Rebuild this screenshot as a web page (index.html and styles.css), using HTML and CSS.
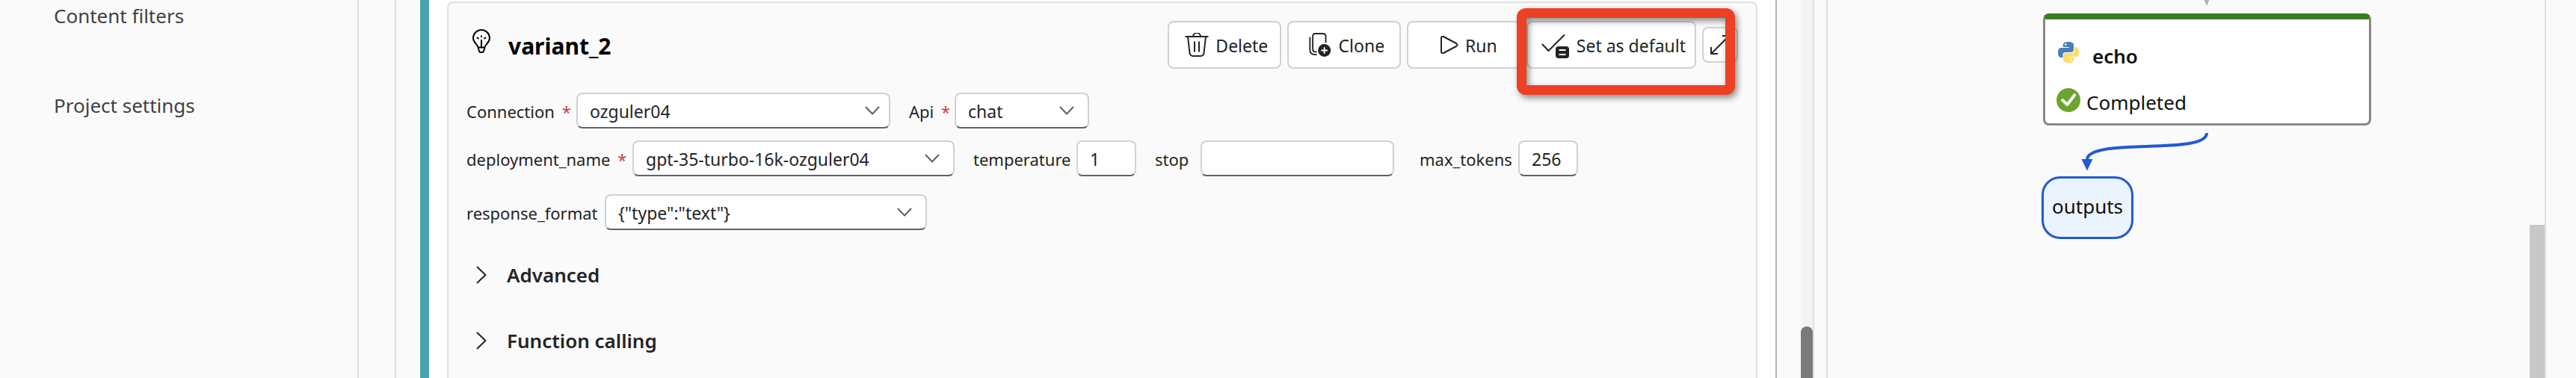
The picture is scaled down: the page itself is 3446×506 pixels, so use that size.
FILE: index.html
```html
<!DOCTYPE html>
<html lang="en">
<head>
<meta charset="utf-8">
<title>Prompt flow - variant_2</title>
<link rel="stylesheet" href="styles.css">
</head>
<body>
<nav class="sidebar" aria-label="Project">
  <a class="nav-link" href="#filters">Content filters</a>
  <a class="nav-link" href="#settings">Project settings</a>
</nav>
<main class="workspace">
  <section class="editor">
    <div class="node-panel">
      <article class="variant">
        <header class="variant-head">
          <svg class="bulb" viewBox="0 0 24 32" aria-hidden="true">
            <path d="M7.5 24.5C7 20 1 18.500 1 12A11 11 0 0 1 23 12C23 18.500 17 20 16.500 24.500M7.500 24.500h9M7.500 24.500l1.500 5q.4 1.500 2 1.500h2q1.600 0 2-1.500l1.500-5M12 24V14M12 8.500v2.500M6 11l2.500 2M18 11l-2.500 2"/>
          </svg>
          <h2 class="variant-name">variant_2</h2>
          <div class="toolbar">
            <button class="btn" type="button">
              <svg class="icon" viewBox="0 0 32 32" aria-hidden="true"><path d="M.5 5h31M11 5a5 5 0 0 1 10 0M4 5l2.500 22q.5 4 4.500 4h10q4 0 4.500-4L28 5M13 11.500v14M19 11.500v14"/></svg>
              Delete
            </button>
            <button class="btn" type="button">
              <svg class="icon" viewBox="0 0 32 34" aria-hidden="true"><path d="M24 14V5q0-4-4-4H9Q5.500 1 5.500 5v18q0 4 4 4h2M1.500 6v18q0 7 7 7h3"/><circle class="solid" cx="22" cy="25" r="9"/><path class="cut" d="M22 20.500v9M17.500 25h9"/></svg>
              Clone
            </button>
            <button class="btn" type="button">
              <svg class="icon" viewBox="0 0 32 32" aria-hidden="true"><path d="M9 7v18q0 3 3 2l17-9q3-2 0-4L12 5Q9 4 9 7z"/></svg>
              Run
            </button>
            <button class="btn" type="button">
              <svg class="icon icon-wide" viewBox="0 0 38 36" aria-hidden="true"><path d="M1 17l8.500 9L31 4.500"/><rect class="solid" x="19" y="20" width="18" height="16" rx="4"/><path class="cut" d="M23.500 25h9M23.500 31h9"/></svg>
              Set as default
            </button>
            <button class="btn btn-small" type="button" aria-label="Expand">
              <svg class="icon" viewBox="0 0 32 32" aria-hidden="true"><path d="M4 28L28 4M4 19v9h9M19 4h9v9"/></svg>
            </button>
            <div class="highlight"></div>
          </div>
        </header>

        <form class="params">
          <div class="row">
            <label class="label label-connection" for="connection">Connection <span class="req">*</span></label>
            <span class="picker picker-edge">
              <select class="control" id="connection"><option>ozguler04</option></select>
              <svg class="chevron" viewBox="0 0 20 12" aria-hidden="true"><path d="M1 1l9 9.500L19 1"/></svg>
            </span>
            <label class="label label-api" for="api">Api <span class="req">*</span></label>
            <span class="picker picker-short">
              <select class="control" id="api"><option>chat</option></select>
              <svg class="chevron" viewBox="0 0 20 12" aria-hidden="true"><path d="M1 1l9 9.500L19 1"/></svg>
            </span>
          </div>
          <div class="row">
            <label class="label label-deployment" for="deployment">deployment_name <span class="req">*</span></label>
            <span class="picker">
              <select class="control" id="deployment"><option>gpt-35-turbo-16k-ozguler04</option></select>
              <svg class="chevron" viewBox="0 0 20 12" aria-hidden="true"><path d="M1 1l9 9.500L19 1"/></svg>
            </span>
            <label class="label label-temperature" for="temperature">temperature</label>
            <input class="control number" id="temperature" type="text" value="1">
            <label class="label label-stop" for="stop">stop</label>
            <input class="control stop" id="stop" type="text">
            <label class="label label-tokens" for="tokens">max_tokens</label>
            <input class="control number" id="tokens" type="text" value="256">
          </div>
          <div class="row row-last">
            <label class="label label-format" for="format">response_format</label>
            <span class="picker">
              <select class="control" id="format"><option>{"type":"text"}</option></select>
              <svg class="chevron" viewBox="0 0 20 12" aria-hidden="true"><path d="M1 1l9 9.500L19 1"/></svg>
            </span>
          </div>
        </form>

        <div class="sections">
          <button class="section" type="button" aria-expanded="false">
            <svg class="caret" viewBox="0 0 14 24" aria-hidden="true"><path d="M1 1l11.500 11L1 23"/></svg>Advanced
          </button>
          <button class="section" type="button" aria-expanded="false">
            <svg class="caret" viewBox="0 0 14 24" aria-hidden="true"><path d="M1 1l11.500 11L1 23"/></svg>Function calling
          </button>
        </div>
      </article>
    </div>
    <div class="scroll-track"><div class="scroll-thumb"></div></div>
  </section>

  <section class="graph" aria-label="Graph">
    <svg class="edges" viewBox="0 0 440 240" aria-hidden="true">
      <path class="edge-in" d="M213-6h12l-6 14z"/>
      <path class="edge-out" d="M219 178C219 209 59 183 59 214"/>
      <path class="edge-tip" d="M51.500 213h15L59 228.500z"/>
    </svg>
    <div class="node">
      <div class="node-title">
        <svg class="python" viewBox="0 0 28 28" aria-hidden="true">
          <path class="py-blue" d="M14 0C9 0 7 1.500 7 4v3h7.500v1H4Q0 8 0 14q0 7 4 7h2.500v-3.500Q6.500 14 10.500 14H17q4 0 4-4V4Q21 0 14 0z"/>
          <path class="py-yellow" d="M14 28c5 0 7-1.500 7-4v-3h-7.500v-1H24q4 0 4-6 0-7-4-7h-2v4q0 4-4 4h-7q-4 0-4 4v5q0 4 7 4z"/>
          <circle class="py-eye" cx="10.300" cy="3.500" r="1.300"/><circle class="py-eye" cx="17.700" cy="24.500" r="1.300"/>
        </svg>
        echo
      </div>
      <div class="node-status">
        <svg class="done" viewBox="0 0 32 32" aria-hidden="true"><circle class="done-disc" cx="16" cy="16" r="16"/><path class="done-tick" d="M8.500 16.500l6 5.500L24 9.500"/></svg>
        Completed
      </div>
    </div>
    <div class="outputs">outputs</div>
    <div class="graph-thumb"></div>
  </section>
</main>
</body>
</html>
```

FILE: styles.css
```css
* { box-sizing: border-box; }

body {
  display: flex;
  min-height: 100vh;
  margin: 0;
  background: #fafafa;
  color: #242424;
  font-family: "Noto Sans", "Open Sans", sans-serif;
  font-size: 23px;
  line-height: 32px;
}

button, select, input { color: inherit; font: inherit; }

svg { display: block; flex: none; fill: none; stroke: #242424; stroke-width: 2; stroke-linejoin: round; }

/* Left navigation */
.sidebar {
  display: flex;
  flex-direction: column;
  gap: 80px;
  flex: none;
  width: 480px;
  padding: 1px 0 0 72px;
  border-right: 2px solid #e0e0e0;
}
.nav-link {
  color: #424242;
  font-size: 26px;
  line-height: 40px;
  text-decoration: none;
}

/* Workspace columns */
.workspace {
  display: grid;
  grid-template-columns: minmax(0, 1899fr) minmax(0, 963fr);
  flex: 1;
  gap: 16px;
  min-width: 0;
  margin: 0 40px 0 48px;
}
.editor {
  display: flex;
  gap: 32px;
  padding-left: 32px;
  border: solid #e0e0e0;
  border-width: 0 2px;
}
.node-panel {
  display: flex;
  flex: 1;
  padding: 2px 24px 0;
  background: #fff;
  border-left: 12px solid #4aa2ad;
  border-right: 2px solid #b3b3b3;
}
.scroll-track {
  display: flex;
  flex: none;
  width: 16px;
  padding-top: 437px;
  background: #f3f3f3;
}
.scroll-thumb {
  flex: 1;
  background: #7a7a7a;
  border-radius: 8px 8px 0 0;
}

/* Variant card */
.variant {
  flex: 1;
  padding: 24px 24px 0;
  background: #fafafa;
  border: 2px solid #e0e0e0;
  border-bottom: 0;
  border-radius: 8px 8px 0 0;
}
.variant-head {
  display: flex;
  align-items: center;
  gap: 24px;
  height: 64px;
  padding-left: 8px;
}
.bulb { width: 24px; height: 32px; margin-bottom: 10px; stroke: #000; }
.variant-name {
  flex: 1;
  margin: 0;
  color: #000;
  font-size: 30px;
  line-height: 40px;
  padding-top: 4px;
}
.toolbar {
  position: relative;
  display: flex;
  align-items: center;
  gap: 8px;
}
.btn {
  display: flex;
  align-items: center;
  justify-content: center;
  gap: 9px;
  min-width: 152px;
  height: 64px;
  padding: 2px 12px 0 18px;
  background: #fff;
  border: 2px solid #d1d1d1;
  border-radius: 8px;
}
.btn-small { min-width: 48px; height: 48px; padding: 2px 0 0; }
.icon { width: 32px; height: 32px; margin-bottom: 2px; }
.icon-wide { width: 38px; height: 36px; }
.solid { fill: #242424; stroke: none; }
.cut { stroke: #fff; }
.highlight {
  position: absolute;
  top: -17px;
  right: 4px;
  width: 292px;
  height: 116px;
  border: 13px solid #ee4023;
  border-radius: 12px;
  filter: drop-shadow(3px 4px 4px rgba(0, 0, 0, 0.45));
  pointer-events: none;
}

/* Parameter form */
.params {
  display: flex;
  flex-direction: column;
  gap: 16px;
  padding-top: 32px;
}
.row { display: flex; align-items: center; }
.row-last { margin-top: 8px; }
.label { flex: none; padding-top: 2px; font-size: 22px; white-space: nowrap; }
.req { padding-left: 4px; color: #c8403c; }
.label-connection { width: 147px; }
.label-api { width: 86px; padding-left: 25px; }
.label-deployment { width: 222px; }
.label-temperature { width: 163px; padding-left: 25px; }
.label-stop { width: 86px; padding-left: 25px; }
.label-tokens { width: 166px; padding-left: 34px; }
.label-format { width: 185px; }
.control {
  width: 100%;
  height: 48px;
  margin: 0;
  padding: 2px 16px 0;
  appearance: none;
  background: #fff;
  border: 2px solid #d1d1d1;
  border-bottom-color: #616161;
  border-radius: 8px;
}
.number { width: 80px; }
.stop { width: 259px; }
.picker { position: relative; flex: none; width: 431px; }
.picker-edge { width: 420px; }
.picker-short { width: 180px; }
.chevron {
  position: absolute;
  top: 18px;
  right: 20px;
  width: 20px;
  height: 12px;
  stroke: #616161;
  pointer-events: none;
}
.picker-edge .chevron { right: 14px; }

/* Collapsed sections */
.sections {
  display: flex;
  flex-direction: column;
  align-items: flex-start;
  gap: 48px;
  padding-top: 40px;
}
.section {
  display: flex;
  align-items: center;
  gap: 27px;
  padding: 0 0 0 13px;
  background: none;
  border: 0;
  font-size: 26px;
  font-weight: 600;
  line-height: 40px;
}
.caret { width: 14px; height: 24px; }

/* Flow graph */
.graph {
  position: relative;
  border: solid #e0e0e0;
  border-width: 0 2px;
  overflow: hidden;
}
.edges { position: absolute; top: 0; left: 288px; width: 440px; height: 240px; stroke: none; }
.edge-in { fill: #b3b0ad; }
.edges .edge-out { stroke: #2459d6; stroke-width: 4; }
.edge-tip { fill: #2459d6; }
.node {
  position: absolute;
  top: 18px;
  left: 288px;
  width: 439px;
  height: 150px;
  padding: 29px 15px 0;
  background: #fff;
  border: 3px solid #8a8886;
  border-top: 8px solid #397c27;
  border-radius: 8px;
  font-size: 26px;
}
.node-title, .node-status { display: flex; color: #111; line-height: 40px; }
.node-title { gap: 18px; padding-left: 2px; font-weight: 600; }
.node-status { gap: 8px; padding-top: 22px; }
.python { width: 28px; height: 28px; margin-top: 1px; stroke: none; }
.py-blue { fill: #4a7ebb; }
.py-yellow { fill: #fcdc68; }
.py-eye { fill: #fff; }
.done { width: 32px; height: 32px; margin-top: 1px; }
.done-disc { fill: #6aa52f; stroke: none; }
.done-tick { stroke: #fff; stroke-width: 4; stroke-linecap: square; }
.outputs {
  position: absolute;
  top: 236px;
  left: 286px;
  width: 123px;
  height: 84px;
  background: #ebf3fc;
  border: 3px solid #2459d6;
  border-radius: 25px;
  color: #111;
  font-size: 26px;
  line-height: 74px;
  text-align: center;
}
.graph-thumb {
  position: absolute;
  top: 301px;
  right: 0;
  bottom: 0;
  width: 20px;
  background: #c8c8c8;
}
```
